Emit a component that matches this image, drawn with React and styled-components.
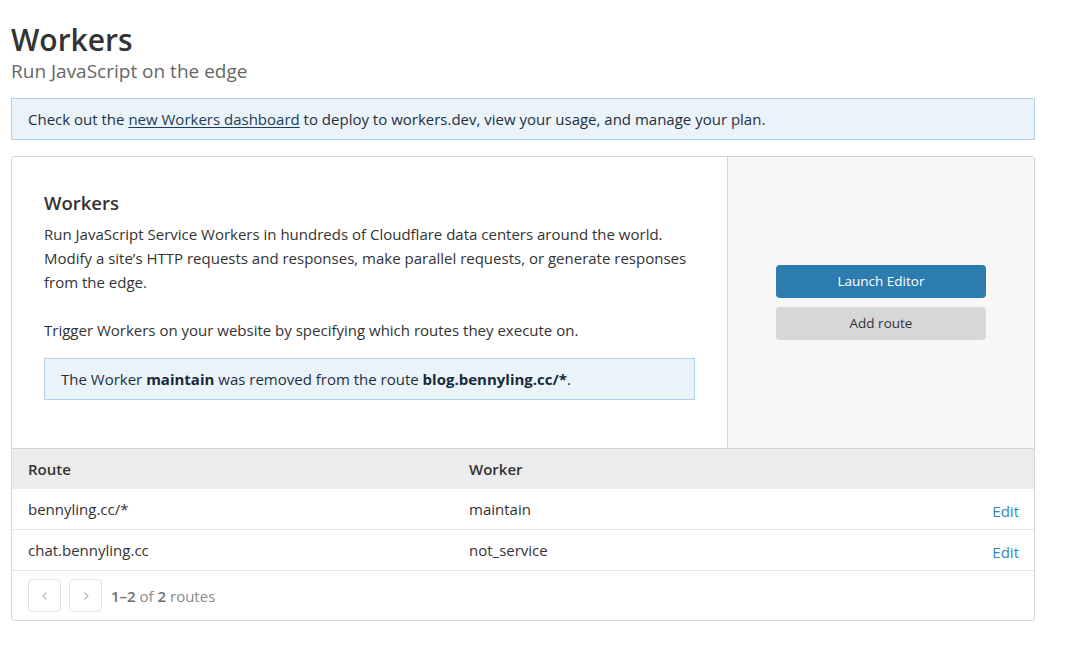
import React from "react";
import styled, { createGlobalStyle } from "styled-components";

const Global = createGlobalStyle`
  html, body { margin: 0; padding: 0; background: #fff; }
  body { font-family: "Open Sans", "Noto Sans", sans-serif; color: #333; }
  * { box-sizing: border-box; }
`;

const Page = styled.div`
  width: 1035px;
  padding: 20px 0 40px 11px;
`;

const Title = styled.h1`
  margin: 0;
  font-size: 30px;
  line-height: 40px;
  font-weight: 600;
  color: #333;
`;

const Subtitle = styled.div`
  font-size: 19px;
  line-height: 24px;
  color: #666;
  margin-top: -1px;
`;

const Banner = styled.div`
  margin-top: 15px;
  background: #ebf3fa;
  border: 1px solid #b1d3ea;
  padding: 0 16px;
  height: 42px;
  display: flex;
  align-items: center;
  font-size: 15px;
  color: #1f2f3d;
`;

const Link = styled.a`
  color: #1c3c57;
  text-decoration: underline;
  text-underline-offset: 2px;
`;

const Card = styled.div`
  margin-top: 16px;
  border: 1px solid #d6d6d6;
  border-radius: 3px;
  overflow: hidden;
`;

const Top = styled.div`
  display: grid;
  grid-template-columns: 716px 1fr;
  border-bottom: 1px solid #d6d6d6;
`;

const Main = styled.div`
  padding: 34px 32px 48px 32px;
  border-right: 1px solid #d6d6d6;
`;

const Heading = styled.h2`
  margin: 0 0 7px;
  font-size: 18.5px;
  line-height: 24px;
  font-weight: 600;
  color: #333;
`;

const Para = styled.p`
  margin: 0 0 ${(p) => p.$gap || 0}px;
  font-size: 15px;
  line-height: 24px;
  color: #333;
`;

const Alert = styled.div`
  background: #ebf3fa;
  border: 1px solid #b1d3ea;
  height: 42px;
  padding: 0 16px;
  display: flex;
  align-items: center;
  font-size: 15px;
  color: #1f2f3d;
  b { font-weight: 700; color: #1a2a38; }
`;

const Side = styled.div`
  background: #f7f7f7;
  display: flex;
  flex-direction: column;
  align-items: center;
  justify-content: center;
  gap: 9px;
  padding-bottom: 1px;
`;

const Button = styled.button`
  width: 210px;
  height: 33px;
  border: none;
  border-radius: 4px;
  font-family: inherit;
  font-size: 13.5px;
  cursor: pointer;
  background: ${(p) => (p.$primary ? "#2c7cb0" : "#d6d7d9")};
  color: ${(p) => (p.$primary ? "#fff" : "#333")};
`;

const Row = styled.div`
  display: grid;
  grid-template-columns: 441px 1fr auto;
  align-items: center;
  padding: 0 15px 0 16px;
  height: ${(p) => (p.$head ? 40 : 41)}px;
  background: ${(p) => (p.$head ? "#ebeceb" : "#fff")};
  border-bottom: ${(p) => (p.$head ? "none" : "1px solid #e3e3e3")};
  font-size: 15px;
  font-weight: ${(p) => (p.$head ? 600 : 400)};
  color: #333;
`;

const Edit = styled.a`
  color: #2f86c3;
  font-size: 15px;
  padding-top: 3px;
  cursor: pointer;
`;

const Footer = styled.div`
  display: flex;
  align-items: center;
  gap: 8px;
  padding: 8px 16px 8px;
  height: 49px;
`;

const PageBtn = styled.button`
  width: 33px;
  height: 33px;
  border: 1px solid #e3e3e3;
  border-radius: 4px;
  background: #fff;
  display: flex;
  align-items: center;
  justify-content: center;
  padding: 0;
  color: #b5b5b5;
`;

const Count = styled.span`
  font-size: 15px;
  color: #8a8a8a;
  margin-left: 1px;
  b { color: #6f6f6f; font-weight: 600; }
`;

const Chevron = ({ dir }) => (
  <svg width="10" height="10" viewBox="0 0 10 10" fill="none" stroke="currentColor" strokeWidth="1.1">
    {dir === "left" ? <path d="M6.5 1.5 L3 5 L6.5 8.5" /> : <path d="M3.5 1.5 L7 5 L3.5 8.5" />}
  </svg>
);

const routes = [
  { route: "bennyling.cc/*", worker: "maintain" },
  { route: "chat.bennyling.cc", worker: "not_service" },
];

export default function App() {
  return (
    <>
      <Global />
      <Page>
        <Title>Workers</Title>
        <Subtitle>Run JavaScript on the edge</Subtitle>
        <Banner>
          <span>
            Check out the <Link href="#">new Workers dashboard</Link> to deploy to workers.dev, view your usage, and manage your plan.
          </span>
        </Banner>
        <Card>
          <Top>
            <Main>
              <Heading>Workers</Heading>
              <Para $gap={24}>
                Run JavaScript Service Workers in hundreds of Cloudflare data centers around the world. Modify a site’s HTTP
                requests and responses, make parallel requests, or generate responses from the edge.
              </Para>
              <Para $gap={16}>Trigger Workers on your website by specifying which routes they execute on.</Para>
              <Alert>
                <span>
                  The Worker <b>maintain</b> was removed from the route <b>blog.bennyling.cc/*</b>.
                </span>
              </Alert>
            </Main>
            <Side>
              <Button $primary>Launch Editor</Button>
              <Button>Add route</Button>
            </Side>
          </Top>
          <Row $head>
            <span>Route</span>
            <span>Worker</span>
            <span />
          </Row>
          {routes.map((r) => (
            <Row key={r.route}>
              <span>{r.route}</span>
              <span>{r.worker}</span>
              <Edit>Edit</Edit>
            </Row>
          ))}
          <Footer>
            <PageBtn aria-label="Previous"><Chevron dir="left" /></PageBtn>
            <PageBtn aria-label="Next"><Chevron dir="right" /></PageBtn>
            <Count>
              <b>1–2</b> of <b>2</b> routes
            </Count>
          </Footer>
        </Card>
      </Page>
    </>
  );
}
